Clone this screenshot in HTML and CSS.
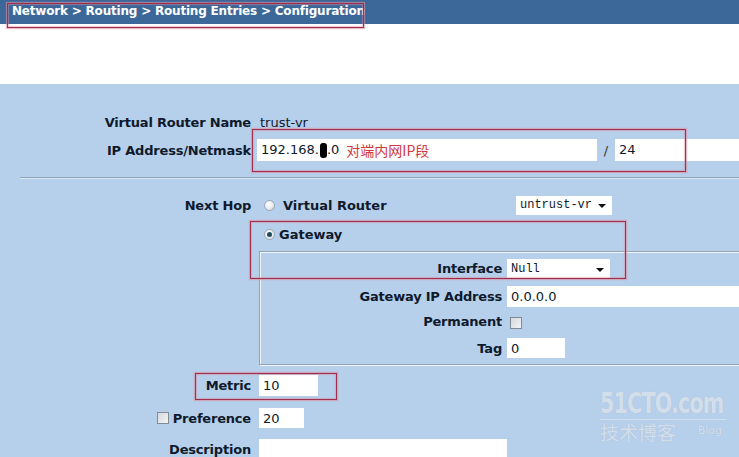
FILE: index.html
```html
<!DOCTYPE html>
<html>
<head>
<meta charset="utf-8">
<link rel="stylesheet" href="styles.css">
</head>
<body>
<div class="page">
  <div class="topbar">Network &gt; Routing &gt; Routing Entries &gt; Configuration</div>
  <div class="blank"></div>
  <div class="panel">
    <div class="row row-vr">
      <div class="label">Virtual Router Name</div>
      <div class="value plain">trust-vr</div>
    </div>
    <div class="row row-ip">
      <div class="label">IP Address/Netmask</div>
      <div class="value ipvals">
        <div class="input ip"><span>192.168.</span><span class="blot"></span><span>.0</span><span class="note">对端内网IP段</span></div>
        <span class="slash">/</span>
        <div class="input mask">24</div>
      </div>
    </div>
    <div class="sep"></div>
    <div class="row row-nh">
      <div class="label">Next Hop</div>
      <div class="value nhvals">
        <span class="choice vr"><span class="radio"></span><span class="choice-text">Virtual Router</span></span>
        <div class="select sel-vr"><span>untrust-vr</span><span class="arrow"></span></div>
      </div>
    </div>
    <div class="row row-gw">
      <div class="label"></div>
      <div class="value">
        <span class="choice gw"><span class="radio on"></span><span class="choice-text">Gateway</span></span>
      </div>
    </div>
    <div class="group">
      <div class="grow g-if">
        <div class="label">Interface</div>
        <div class="select sel-if"><span>Null</span><span class="arrow"></span></div>
      </div>
      <div class="grow g-ip">
        <div class="label">Gateway IP Address</div>
        <div class="input gwip">0.0.0.0</div>
      </div>
      <div class="grow g-perm">
        <div class="label">Permanent</div>
        <div><span class="check perm"></span></div>
      </div>
      <div class="grow g-tag">
        <div class="label">Tag</div>
        <div class="input tag">0</div>
      </div>
    </div>
    <div class="row row-metric">
      <div class="label">Metric</div>
      <div class="value"><div class="input metric">10</div></div>
    </div>
    <div class="row row-pref">
      <div class="label"><span class="check pref"></span>Preference</div>
      <div class="value"><div class="input pref-in">20</div></div>
    </div>
    <div class="row row-desc">
      <div class="label">Description</div>
      <div class="value"><div class="input desc"></div></div>
    </div>
  </div>

  <div class="mark mark-head"></div>
  <div class="mark mark-ip"></div>
  <div class="mark mark-gw"></div>
  <div class="mark mark-metric"></div>

  <div class="watermark">
    <div class="wm-top"><span class="wm-logo">51CTO.com</span></div>
    <div class="wm-bottom"><span class="wm-cn">技术博客</span><span class="wm-blog">Blog</span></div>
  </div>
</div>
</body>
</html>
```
FILE: styles.css
```css
html, body {
  margin: 0;
  padding: 0;
  background: #b6cfea;
}
.page {
  position: relative;
  width: 739px;
  height: 457px;
  overflow: hidden;
  font-family: "DejaVu Sans", Verdana, sans-serif;
  font-size: 13px;
  color: #0f1a2c;
}
.topbar {
  height: 24px;
  line-height: 23px;
  background: #3c6899;
  color: #fff;
  font-weight: bold;
  font-size: 12px;
  letter-spacing: -0.2px;
  padding-left: 12px;
  white-space: nowrap;
}
.blank {
  height: 60px;
  background: #fff;
}
.panel {
  background: #b6cfea;
  padding-top: 29px;
  height: 400px;
}
.row {
  display: grid;
  grid-template-columns: 251px 1fr;
  column-gap: 7px;
  align-items: center;
}
.label {
  text-align: right;
  font-weight: bold;
  letter-spacing: -0.2px;
  white-space: nowrap;
}
.plain {
  padding-left: 2px;
  font-weight: normal;
}
.row-vr { height: 18px; }
.row-ip { height: 22px; margin-top: 8px; }
.input {
  box-sizing: border-box;
  background: #fff;
  height: 21px;
  line-height: 22px;
  padding-left: 4px;
  white-space: nowrap;
  overflow: hidden;
}
.ipvals {
  display: flex;
  align-items: center;
  margin-left: -1px;
}
.input.ip {
  width: 340px;
  height: 22px;
  line-height: 22px;
  display: flex;
  align-items: center;
}
.blot {
  display: inline-block;
  width: 7px;
  height: 15px;
  background: #000;
  border-radius: 3px;
  margin: 0 0 0 1px;
}
.note {
  color: #d03a3a;
  margin-left: 7px;
  font-family: "Noto Sans CJK SC", sans-serif;
  font-size: 14px;
}
.slash {
  width: 18px;
  text-align: center;
  color: #333;
}
.input.mask {
  width: 160px;
  height: 22px;
  line-height: 22px;
}
.sep {
  margin: 16px 0 0 20px;
  height: 0;
  border-top: 1px solid #8ea2b8;
  border-bottom: 1px solid #dbe7f4;
}
.row-nh { height: 20px; margin-top: 16px; }
.nhvals {
  display: flex;
  align-items: center;
}
.choice {
  display: inline-flex;
  align-items: center;
  font-weight: bold;
}
.choice.vr { width: 258px; }
.radio {
  box-sizing: border-box;
  display: inline-block;
  width: 11px;
  height: 11px;
  margin-left: 6px;
  border-radius: 50%;
  border: 1px solid #9aa6b2;
  background: radial-gradient(circle at 40% 35%, #ffffff 0%, #e6e9ec 60%, #c9cfd5 100%);
  position: relative;
}
.radio.on::after {
  content: "";
  position: absolute;
  left: 2px;
  top: 2px;
  width: 5px;
  height: 5px;
  border-radius: 50%;
  background: #1f4d5e;
}
.choice.vr .choice-text { margin-left: 8px; }
.choice.gw .choice-text { margin-left: 4px; }
.select {
  box-sizing: border-box;
  background: #fff;
  height: 19px;
  display: flex;
  align-items: center;
  justify-content: space-between;
  padding: 0 6px 0 4px;
  font-family: "Liberation Mono", "Courier New", monospace;
  font-size: 12px;
}
.sel-vr { width: 96px; }
.sel-if { width: 103px; }
.arrow {
  width: 0;
  height: 0;
  border-left: 4px solid transparent;
  border-right: 4px solid transparent;
  border-top: 4px solid #111;
  margin-top: 2px;
}
.row-gw { height: 20px; margin-top: 10px; }
.group {
  margin: 6px -20px 0 259px;
  border: 1px solid #8ea2b8;
  box-shadow: inset 1px 1px 0 #f2f6fb, 1px 1px 0 #f2f6fb;
  padding: 7px 0 6px 0;
}
.grow {
  display: grid;
  grid-template-columns: 242px 1fr;
  column-gap: 5px;
  align-items: center;
}
.g-if { height: 19px; }
.g-ip { height: 21px; margin-top: 8px; }
.g-perm { height: 21px; margin-top: 4px; }
.g-tag { height: 20px; margin-top: 6px; }
.input.gwip { width: 260px; }
.input.tag { width: 58px; height: 20px; line-height: 21px; }
.check {
  box-sizing: border-box;
  display: inline-block;
  width: 12px;
  height: 12px;
  border: 1px solid #7f8b97;
  background: linear-gradient(135deg, #d6dade 0%, #f3f4f5 100%);
  vertical-align: middle;
}
.check.perm { margin-left: 3px; }
.check.pref { margin-right: 4px; position: relative; top: -1px; }
.row-metric { height: 21px; margin-top: 10px; }
.row-metric .value, .row-pref .value, .row-desc .value { padding-left: 1px; }
.input.metric { width: 59px; }
.row-pref { height: 20px; margin-top: 12px; }
.input.pref-in { width: 45px; height: 20px; line-height: 21px; }
.row-desc { height: 20px; margin-top: 11px; }
.input.desc { width: 248px; height: 20px; }

.mark {
  position: absolute;
  border: 1px solid #9e2f4c;
  box-shadow: 0 0 1px 1px rgba(220, 140, 160, 0.6), inset 0 0 1px 1px rgba(220, 140, 160, 0.5);
  pointer-events: none;
}
.mark-head { left: 7px; top: 3px; width: 355px; height: 23px; }
.mark-ip { left: 252px; top: 129px; width: 432px; height: 41px; }
.mark-gw { left: 250px; top: 221px; width: 374px; height: 56px; }
.mark-metric { left: 195px; top: 373px; width: 140px; height: 25px; }

.watermark {
  position: absolute;
  left: 600px;
  top: 388px;
  width: 126px;
  color: #d3deeb;
  text-shadow: 0 0 1px #a9bdd4;
}
.wm-top {
  height: 31px;
  border-bottom: 1px solid #d3deeb;
  white-space: nowrap;
  overflow: visible;
}
.wm-logo {
  display: inline-block;
  font-family: "DejaVu Sans Condensed", "DejaVu Sans", sans-serif;
  font-weight: bold;
  font-size: 28px;
  line-height: 32px;
  letter-spacing: -1px;
  transform: scaleX(0.82);
  transform-origin: 0 50%;
}
.wm-bottom {
  display: flex;
  align-items: center;
  justify-content: space-between;
  white-space: nowrap;
}
.wm-cn {
  font-family: "Noto Sans CJK SC", sans-serif;
  font-size: 19px;
  line-height: 24px;
}
.wm-blog {
  font-family: "DejaVu Sans", sans-serif;
  font-size: 11px;
  margin-right: 4px;
  margin-top: -4px;
}
```
